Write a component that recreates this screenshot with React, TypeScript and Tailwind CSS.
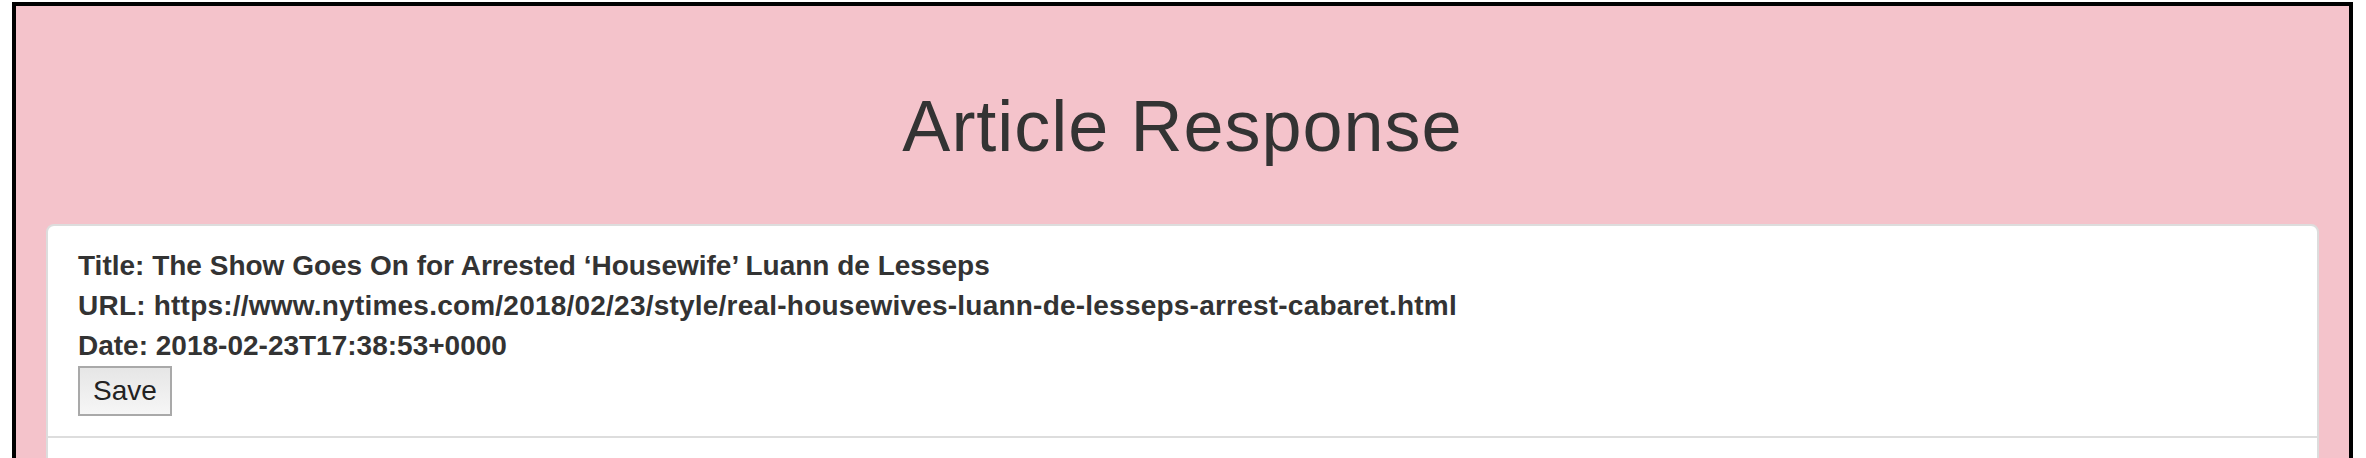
export default function App() {
  return (
    <div className="min-h-screen bg-white pl-[12px] pt-[2px] pr-[13px] font-['Liberation_Sans',Arial,sans-serif] text-[#333333]">
      <div className="border-4 border-black bg-[#f4c3cb] px-[30px] pb-[40px]">
        <h1 className="pt-[81px] pb-[58px] text-center text-[72px] leading-[79px] font-normal tracking-[1px]">
          Article Response
        </h1>
        <div className="flex flex-col">
          <div className="rounded-t-[8px] border-2 border-[#dddddd] bg-white px-[30px] py-[20px] text-[28px] leading-[40px] font-bold">
            <div>Title: The Show Goes On for Arrested ‘Housewife’ Luann de Lesseps</div>
            <div className="tracking-[0.22px]">URL: https://www.nytimes.com/2018/02/23/style/real-housewives-luann-de-lesseps-arrest-cabaret.html</div>
            <div>Date: 2018-02-23T17:38:53+0000</div>
            <button className="h-[50px] border-2 border-[#a9a9a9] bg-gradient-to-b from-[#e6e6e6] to-[#f6f6f6] px-[13px] text-[28px] leading-[40px] font-normal text-[#222222]">
              Save
            </button>
          </div>
          <div className="-mt-[2px] h-[80px] border-2 border-[#dddddd] bg-white"></div>
        </div>
      </div>
    </div>
  );
}
